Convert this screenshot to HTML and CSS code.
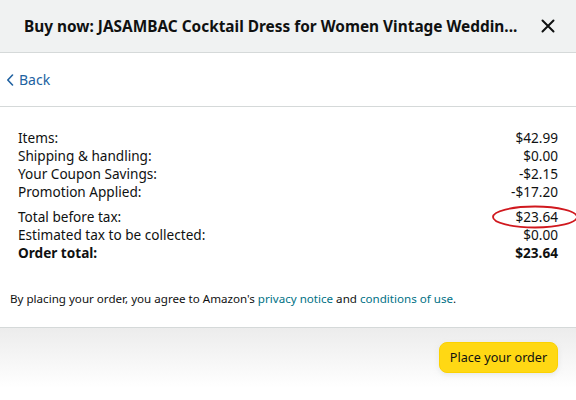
FILE: index.html
```html
<!DOCTYPE html>
<html>
<head>
<meta charset="utf-8">
<link rel="stylesheet" href="styles.css">
</head>
<body>
<div class="modal">
  <div class="header">
    <div class="title">Buy now: JASAMBAC Cocktail Dress for Women Vintage Weddin...</div>
    <svg class="close" width="14" height="14" viewBox="0 0 14 14"><path d="M1.5 1.5 L12.5 12.5 M12.5 1.5 L1.5 12.5" stroke="#0f1111" stroke-width="2" stroke-linecap="round"/></svg>
  </div>
  <div class="backrow">
    <a class="back"><svg class="chev" width="8" height="12" viewBox="0 0 8 12"><path d="M6.5 1 L1.8 6 L6.5 11" stroke="#2162a1" stroke-width="1.6" fill="none" stroke-linecap="round" stroke-linejoin="round"/></svg>Back</a>
  </div>
  <div class="summary">
    <div class="group">
      <div class="row"><span>Items:</span><span>$42.99</span></div>
      <div class="row"><span>Shipping &amp; handling:</span><span>$0.00</span></div>
      <div class="row"><span>Your Coupon Savings:</span><span>-$2.15</span></div>
      <div class="row"><span>Promotion Applied:</span><span>-$17.20</span></div>
    </div>
    <div class="group">
      <div class="row"><span>Total before tax:</span><span class="circled">$23.64</span></div>
      <div class="row"><span>Estimated tax to be collected:</span><span>$0.00</span></div>
      <div class="row total"><span>Order total:</span><span>$23.64</span></div>
    </div>
    <p class="legal">By placing your order, you agree to Amazon's <a>privacy notice</a> and <a>conditions of use</a>.</p>
  </div>
  <div class="footer">
    <button class="place">Place your order</button>
  </div>
</div>
<svg class="ellipse" width="90" height="26" viewBox="0 0 90 26"><ellipse cx="44" cy="13" rx="42" ry="10.5" fill="none" stroke="#d0181e" stroke-width="1.8"/></svg>
</body>
</html>
```
FILE: styles.css
```css
html, body {
  margin: 0;
  padding: 0;
  background: #fff;
}
body {
  font-family: "Noto Sans", "Open Sans", sans-serif;
  color: #0f1111;
  width: 576px;
  height: 400px;
  overflow: hidden;
  position: relative;
}
.header {
  height: 53px;
  background: #f0f2f2;
  border-bottom: 1px solid #d5d9d9;
  display: flex;
  align-items: center;
  justify-content: space-between;
  padding: 0 21px 0 24px;
  box-sizing: border-box;
}
.title {
  font-weight: 700;
  font-size: 15.4px;
  white-space: nowrap;
}
.close {
  flex: none;
  width: 14px;
  height: 14px;
}
.backrow {
  height: 54px;
  border-bottom: 1px solid #d5d9d9;
  box-sizing: border-box;
  display: flex;
  align-items: center;
  padding-left: 6px;
}
.back {
  color: #2162a1;
  font-size: 14px;
  display: flex;
  align-items: center;
  gap: 5px;
}
.summary {
  padding: 22px 18px 0 18px;
  height: 220px;
  box-sizing: border-box;
}
.group {
  margin-bottom: 7px;
}
.row {
  display: flex;
  justify-content: space-between;
  font-size: 13.6px;
  line-height: 18px;
}
.total {
  font-weight: 700;
}
.legal {
  margin: 29px 0 0 -8px;
  font-size: 11.6px;
  line-height: 16px;
}
.legal a {
  color: #007185;
}
.footer {
  height: 73px;
  border-top: 1px solid #d5d9d9;
  background: linear-gradient(#ececec, #fff 60px);
  display: flex;
  justify-content: flex-end;
  align-items: flex-start;
  padding: 14px 18px 0 0;
  box-sizing: border-box;
}
.place {
  background: #ffd814;
  border: 1px solid #fcd200;
  border-radius: 8px;
  height: 31px;
  width: 119px;
  padding: 0;
  font-family: inherit;
  font-size: 12.6px;
  color: #0f1111;
  box-shadow: 0 2px 5px rgba(213,217,217,.5);
}
.ellipse {
  position: absolute;
  left: 491px;
  top: 204px;
}
```
